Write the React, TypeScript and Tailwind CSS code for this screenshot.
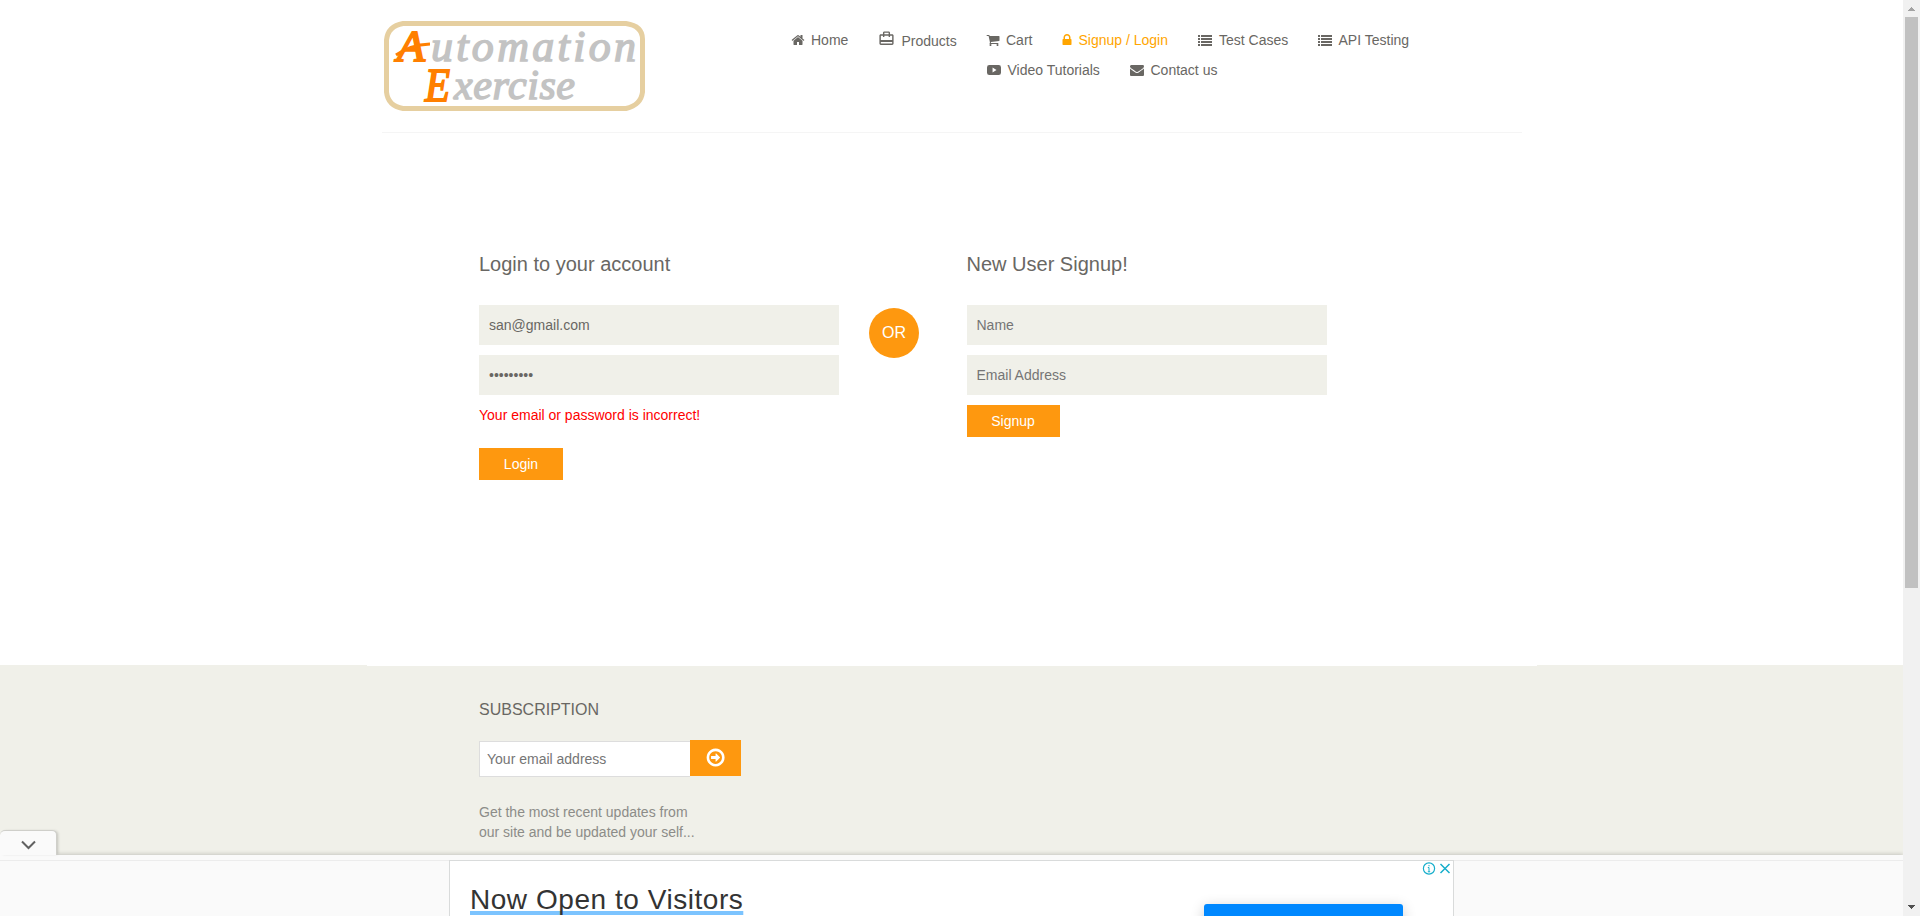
import React from "react";

const ICONS = {
  home: "M1472 992v480q0 26-19 45t-45 19h-384v-384h-256v384h-384q-26 0-45-19t-19-45v-480q0-1 .5-3t.5-3l575-474 575 474q1 2 1 6zm223-69l-62 74q-8 9-21 11h-3q-13 0-21-7l-692-577-692 577q-12 8-24 7-13-2-21-11l-62-74q-8-10-7-23.5t11-21.5l719-599q32-26 76-26t76 26l244 204v-195q0-14 9-23t23-9h192q14 0 23 9t9 23v408l219 182q10 8 11 21.5t-7 23.5z",
  cart: "M704 1536q0 52-38 90t-90 38-90-38-38-90 38-90 90-38 90 38 38 90zm896 0q0 52-38 90t-90 38-90-38-38-90 38-90 90-38 90 38 38 90zm128-1088v512q0 24-16.5 42.5t-40.5 21.5l-1044 122q13 60 13 70 0 16-24 64h920q26 0 45 19t19 45-19 45-45 19h-1024q-26 0-45-19t-19-45q0-11 8-31.5t16-36 21.5-40 15.5-29.5l-177-823h-204q-26 0-45-19t-19-45 19-45 45-19h256q16 0 28.5 6.5t19.5 15.5 13 24.5 8 26 5.5 29.5 4.5 26h1201q26 0 45 19t19 45z",
  lock: "M640 768h512v-192q0-106-75-181t-181-75-181 75-75 181v192zm832 96v576q0 40-28 68t-68 28h-960q-40 0-68-28t-28-68v-576q0-40 28-68t68-28h32v-192q0-184 132-316t316-132 316 132 132 316v192h32q40 0 68 28t28 68z",
  list: "M0 256h256v256H0zM384 256h1408v256H384zM0 640h256v256H0zM384 640h1408v256H384zM0 1024h256v256H0zM384 1024h1408v256H384zM0 1408h256v256H0zM384 1408h1408v256H384z",
  video: "M300 256H1492Q1792 256 1792 560V1232Q1792 1536 1492 1536H300Q0 1536 0 1232V560Q0 256 300 256zM711 580V1210L1216 896z",
  envelope: "M1792 710v794q0 66-47 113t-113 47h-1472q-66 0-113-47t-47-113v-794q44 49 101 87 362 246 497 345 57 42 92.5 65.5t94.5 48 110 24.5h2q51 0 110-24.5t94.5-48 92.5-65.5q170-123 498-345 57-39 100-87zm0-294q0 79-49 151t-122 123q-376 261-468 325-10 7-42.5 31t-54 38.5-52 32.5-57.5 27-50 9h-2q-23 0-50-9t-57.5-27-52-32.5-54-38.5-42.5-31q-91-64-262-182.5t-205-142.5q-62-42-117-115.5t-55-136.5q0-78 41.5-130t118.5-52h1472q65 0 112.5 47t47.5 113z",
  arrow: "M1285 896q0 14-9 23l-320 320q-9 9-23 9-13 0-22.5-9.5t-9.5-22.5v-192h-352q-13 0-22.5-9.5t-9.5-22.5v-192q0-13 9.5-22.5t22.5-9.5h352v-192q0-14 9-23t23-9q12 0 24 10l319 319q9 9 9 23zm163 0q0-148-73-273t-198-198-273-73-273 73-198 198-73 273 73 273 198 198 273 73 273-73 198-198 73-273zm224 0q0 209-103 385.5t-279.5 279.5-385.5 103-385.5-103-279.5-279.5-103-385.5 103-385.5 279.5-279.5 385.5-103 385.5 103 279.5 279.5 103 385.5z",
};

function Icon({ name, className }: { name: keyof typeof ICONS; className: string }) {
  return (
    <svg viewBox="0 0 1792 1792" fill="currentColor" fillRule="evenodd" className={className}>
      <path d={ICONS[name]} />
    </svg>
  );
}

function NavItem({ icon, label, className, gap, active }: { icon: keyof typeof ICONS; label: string; className: string; gap: string; active?: boolean }) {
  return (
    <a className={`flex shrink-0 items-center whitespace-nowrap ${className} ${gap} ${active ? "text-[#ffa500]" : "text-[#696763]"}`}>
      <Icon name={icon} className={`h-[14px] shrink-0 ${active ? "-ml-[2px] w-[14px]" : "w-[14px]"}`} />
      <span>{label}</span>
    </a>
  );
}

function Logo() {
  return (
    <svg width="262" height="91" viewBox="0 0 262 91" className="shrink-0">
      <path d="M19 2.5H242Q259 5 258.500 19V71Q257 84 242 87.500H19Q4 85 2.500 71V19Q4 5 19 2.500z" fill="#fff" stroke="#e6cfa0" strokeWidth="5" />
      <g fontFamily="'Liberation Serif', serif" fontStyle="italic" fontWeight="400">
        <g fill="#ff7f00" stroke="#ff7f00" strokeWidth="1.800">
          <text x="13" y="40" fontSize="44" textLength="28" lengthAdjust="spacingAndGlyphs">A</text>
          <text x="41" y="80" fontSize="46" textLength="25" lengthAdjust="spacingAndGlyphs">E</text>
        </g>
        <path d="M12 34Q26 24 46 23" fill="none" stroke="#ff7f00" strokeWidth="3" />
        <g fill="#c3c3c3" stroke="#c3c3c3" strokeWidth="1.500">
          <text x="47" y="40" fontSize="44" textLength="205" lengthAdjust="spacing">utomation</text>
          <text x="70" y="78" fontSize="42" textLength="121" lengthAdjust="spacing">xercise</text>
        </g>
      </g>
    </svg>
  );
}

const field = "block h-10 w-full bg-[#f0f0e9] px-[10px] text-sm text-[#696763] outline-none placeholder:text-[#757575]";
const button = "flex h-8 items-center justify-center bg-[#fe980f] text-sm text-white";

function Header() {
  return (
    <header className="mx-auto flex h-[133px] w-[1140px] border-b border-[#f5f5f5]">
      <div className="w-[409px] shrink-0 pt-[21px] pl-[2px]">
        <Logo />
      </div>
      <nav className="flex flex-col pt-[30px]">
        <div className="flex h-5 items-center">
          <NavItem icon="home" label="Home" className="w-[89.5px]" gap="gap-[6.5px]" />
          <a className="flex w-[106px] shrink-0 items-center text-[#696763]">
            <svg viewBox="0 0 24 24" fill="currentColor" className="-mt-[4px] -ml-[2px] mr-[6.5px] h-[17px] w-[17px]">
              <path d="M20 6h-3V4c0-1.11-.89-2-2-2H9c-1.11 0-2 .89-2 2v2H4c-1.11 0-2 .89-2 2v11c0 1.11.89 2 2 2h16c1.11 0 2-.89 2-2V8c0-1.11-.89-2-2-2zM9 4h6v2H9V4zm11 15H4v-2h16v2zm0-5H4V8h3v2h2V8h6v2h2V8h3v6z" />
            </svg>
            <span className="pt-[2px]">Products</span>
          </a>
          <NavItem icon="cart" label="Cart" className="w-[76px]" gap="gap-[6px]" />
          <NavItem icon="lock" label="Signup / Login" className="w-[136px]" gap="gap-[4.5px]" active />
          <NavItem icon="list" label="Test Cases" className="w-[120px]" gap="gap-[7px]" />
          <NavItem icon="list" label="API Testing" className="w-[110px]" gap="gap-[6.5px]" />
        </div>
        <div className="mt-[10px] flex h-5 items-center pl-[196px]">
          <NavItem icon="video" label="Video Tutorials" className="w-[143px]" gap="gap-[7px]" />
          <NavItem icon="envelope" label="Contact us" className="w-[110px]" gap="gap-[7px]" />
        </div>
      </nav>
    </header>
  );
}

function Forms() {
  return (
    <main className="flex h-[532px] pt-[117px] pl-[479px]">
      <form className="w-[360px]">
        <h2 className="mb-[40px] h-[15px] text-xl leading-7 text-[#696763]">Login to your account</h2>
        <input className={field} type="email" defaultValue="san@gmail.com" />
        <input className={`${field} mt-[10px]`} type="password" defaultValue="sunflower" />
        <p className="mt-[10px] h-5 text-sm text-[#ff0000]">Your email or password is incorrect!</p>
        <button type="button" className={`${button} mt-[23px] w-[84px]`}>Login</button>
      </form>
      <div className="mt-[58px] ml-[30px] flex h-[50px] w-[50px] items-center justify-center rounded-full bg-[#fe980f] text-base text-white">OR</div>
      <form className="ml-[47.5px] w-[360px]">
        <h2 className="mb-[40px] h-[15px] text-xl leading-7 text-[#696763]">New User Signup!</h2>
        <input className={field} type="text" placeholder="Name" />
        <input className={`${field} mt-[10px]`} type="email" placeholder="Email Address" />
        <button type="button" className={`${button} mt-[10px] w-[93px]`}>Signup</button>
      </form>
    </main>
  );
}

function Footer() {
  return (
    <footer className="h-[251px] bg-[#f0f0e9]">
      <div className="mx-auto h-px w-[1170px] bg-white" />
      <div className="pt-[32px] pl-[479px]">
        <h2 className="h-6 text-base leading-6 text-[#696763]">SUBSCRIPTION</h2>
        <div className="mt-[18px] flex">
          <input className="mt-px h-9 w-[211px] border border-r-0 border-[#dddddd] bg-white px-[7px] text-sm outline-none placeholder:text-[#757575]" placeholder="Your email address" />
          <button type="button" className="flex h-9 w-[51px] items-center justify-center bg-[#fe980f] pb-[2px] text-white">
            <Icon name="arrow" className="h-[21px] w-[21px]" />
          </button>
        </div>
        <p className="mt-[25px] text-sm leading-5 text-[#8c8c88]">
          Get the most recent updates from
          <br />
          our site and be updated your self...
        </p>
      </div>
    </footer>
  );
}

function AdPanel() {
  return (
    <aside className="absolute bottom-0 left-0 h-[86px] w-[1903px]">
      <div className="relative z-10 flex h-[25px] w-[57px] items-center justify-center rounded-t-[5px] border-t border-r border-[#cfcfca] bg-[#fafafa] shadow-[2px_0_3px_-1px_rgba(0,0,0,0.2)]">
        <svg width="15" height="10" viewBox="0 0 15 10" fill="none" stroke="#616161" strokeWidth="2" className="mt-[4px]">
          <path d="M1 1.500L7.500 8 14 1.500" />
        </svg>
      </div>
      <div className="h-[61px] bg-[#fafafa] shadow-[0_-1px_4px_rgba(0,0,0,0.18)]">
        <div className="h-[6px] border-b border-[#ececec]" />
        <div className="-mt-px flex h-[56px]">
          <div className="ml-[449px] flex h-[56px] w-[1005px] overflow-hidden border-x border-t border-[#d9dbdb] bg-white">
            <h3 className="mt-[19px] ml-[20px] h-[40px] w-[274px] shrink-0 whitespace-nowrap text-[28px] leading-[40px] tracking-[0.54px] text-[#333] underline decoration-[#7cc4ff] decoration-[4px] underline-offset-[2px] [text-decoration-skip-ink:none]">Now Open to Visitors</h3>
            <div className="mt-[43px] ml-[460px] h-[30px] w-[199px] shrink-0 rounded-t-[3px] bg-[#0088ff] shadow-[0_3px_14px_rgba(0,0,0,0.2)]" />
            <svg width="29" height="14" viewBox="0 0 29 14" fill="none" stroke="#16aecb" strokeWidth="1.200" className="mt-[1px] ml-[19px] shrink-0">
              <circle cx="7" cy="6.500" r="5.600" />
              <path d="M7 5.500V9.800M5.800 5.500H7M5.800 9.800H8.200M7 3V4.300" strokeWidth="1" />
              <path d="M18.500 2L27.500 11M27.500 2L18.500 11" strokeWidth="1.500" />
            </svg>
          </div>
        </div>
      </div>
    </aside>
  );
}

function Scrollbar() {
  return (
    <div className="relative z-20 flex w-[17px] shrink-0 flex-col items-center bg-[#f1f1f1]">
      <svg width="17" height="17" viewBox="0 0 17 17" shapeRendering="crispEdges">
        <path d="M5 11V10H6V9H7V8H8V7H9V8H10V9H11V10H12V11z" fill="#a3a3a3" />
      </svg>
      <div className="h-[571px] w-[13px] bg-[#c1c1c1]" />
      <svg width="17" height="17" viewBox="0 0 17 17" shapeRendering="crispEdges" className="mt-auto">
        <path d="M5 6V7H6V8H7V9H8V10H9V9H10V8H11V7H12V6z" fill="#505050" />
      </svg>
    </div>
  );
}

export default function App() {
  return (
    <div className="relative flex h-[916px] w-[1920px] overflow-hidden bg-white text-sm leading-5 font-['Liberation_Sans',Arial,sans-serif]">
      <div className="w-[1903px] shrink-0">
        <Header />
        <Forms />
        <Footer />
      </div>
      <Scrollbar />
      <AdPanel />
    </div>
  );
}
